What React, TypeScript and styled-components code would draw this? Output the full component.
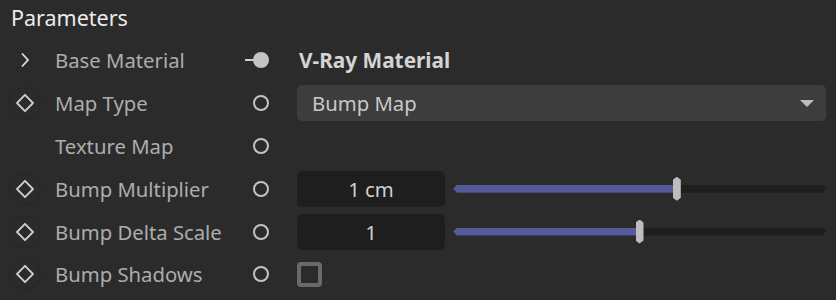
import React from 'react';
import styled, { createGlobalStyle } from 'styled-components';

const GlobalStyle = createGlobalStyle`
    html, body {
        margin: 0;
        padding: 0;
        background: #2b2b2b;
    }
    body {
        font-family: "Noto Sans", "Open Sans", sans-serif;
    }
`;

const Panel = styled.div`
    width: 836px;
    height: 300px;
    background: #2b2b2b;
    box-sizing: border-box;
    overflow: hidden;
`;

const Header = styled.div`
    height: 39px;
    padding-left: 11px;
    font-size: 21.5px;
    line-height: 36px;
    color: #ececec;
`;

const Row = styled.div`
    display: flex;
    align-items: center;
    height: 42.8px;
    padding-left: 9px;
    padding-right: 10px;
`;

const IconSlot = styled.div<{ $round?: boolean }>`
    width: 32px;
    height: 32px;
    flex: none;
    box-sizing: border-box;
    display: flex;
    align-items: center;
    justify-content: center;
    border-radius: 50%;
    border: 1px solid ${p => p.$round ? '#262626' : 'transparent'};
`;

const Label = styled.div`
    width: 190px;
    margin-left: 14px;
    flex: none;
    font-size: 20.3px;
    color: #adadad;
    white-space: nowrap;
`;

const PortSlot = styled.div`
    width: 32px;
    flex: none;
    display: flex;
    align-items: center;
    justify-content: center;
`;

const Value = styled.div`
    flex: 1;
    margin-left: 20px;
    display: flex;
    align-items: center;
    gap: 8px;
`;

const LinkText = styled.div`
    font-size: 20.8px;
    font-weight: bold;
    color: #d4d4d4;
    padding-left: 2px;
`;

const Dropdown = styled.div`
    flex: 1;
    height: 36px;
    border-radius: 5px;
    background: #3d3d3d;
    display: flex;
    align-items: center;
    justify-content: space-between;
    padding: 0 12px 0 15px;
    font-size: 20.3px;
    color: #c8c8c8;
`;

const Caret = styled.div`
    width: 0;
    height: 0;
    border-left: 7px solid transparent;
    border-right: 7px solid transparent;
    border-top: 7px solid #bdbdbd;
`;

const NumberField = styled.div`
    width: 148px;
    height: 36px;
    flex: none;
    border-radius: 5px;
    background: #1e1e1e;
    display: flex;
    align-items: center;
    justify-content: center;
    font-size: 20.3px;
    color: #d0d0d0;
`;

const SliderTrack = styled.div`
    flex: 1;
    height: 8px;
    background: #1e1e1e;
    clip-path: polygon(4px 0, calc(100% - 4px) 0, 100% 50%, calc(100% - 4px) 100%, 4px 100%, 0 50%);
`;

const SliderFill = styled.div`
    height: 100%;
    background: #565a9a;
`;

const SliderWrap = styled.div`
    position: relative;
    flex: 1;
    display: flex;
    align-items: center;
    height: 26px;
`;

const Thumb = styled.div`
    position: absolute;
    top: 1px;
    width: 8px;
    height: 24px;
    margin-left: -4px;
    background: #bdbdbd;
    clip-path: polygon(50% 0, 100% 3px, 100% calc(100% - 3px), 50% 100%, 0 calc(100% - 3px), 0 3px);
`;

const Checkbox = styled.div`
    width: 17px;
    height: 17px;
    border: 4px solid #6a6a6a;
    border-radius: 4px;
`;

const Diamond = () => (
    <svg width="20" height="20" viewBox="0 0 20 20">
        <path d="M10 1.8 L18 10 L10 18.2 L2 10 Z" fill="none" stroke="#cfcfcf" strokeWidth="1.8" strokeLinejoin="round" />
    </svg>
);

const Chevron = () => (
    <svg width="16" height="16" viewBox="0 0 16 16">
        <path d="M5 1.5 L11 8 L5 14.5" fill="none" stroke="#e0e0e0" strokeWidth="1.8" />
    </svg>
);

const Port = ({ linked }: { linked?: boolean }) => (
    <svg width="32" height="20" viewBox="0 0 32 20">
        {linked ? (
            <>
                <line x1="0" y1="10" x2="10" y2="10" stroke="#d0d0d0" strokeWidth="2" />
                <circle cx="16" cy="10" r="8" fill="#c4c4c4" />
            </>
        ) : (
            <circle cx="16" cy="10" r="7" fill="none" stroke="#c4c4c4" strokeWidth="2" />
        )}
    </svg>
);

const Slider = ({ value }: { value: number }) => (
    <SliderWrap>
        <SliderTrack>
            <SliderFill style={{ width: `${value * 100}%` }} />
        </SliderTrack>
        <Thumb style={{ left: `${value * 100}%` }} />
    </SliderWrap>
);

const App = () => {
    return (
        <Panel>
            <GlobalStyle />
            <Header>Parameters</Header>
            <Row>
                <IconSlot><Chevron /></IconSlot>
                <Label>Base Material</Label>
                <PortSlot><Port linked /></PortSlot>
                <Value><LinkText>V-Ray Material</LinkText></Value>
            </Row>
            <Row>
                <IconSlot $round><Diamond /></IconSlot>
                <Label>Map Type</Label>
                <PortSlot><Port /></PortSlot>
                <Value>
                    <Dropdown>Bump Map<Caret /></Dropdown>
                </Value>
            </Row>
            <Row>
                <IconSlot />
                <Label>Texture Map</Label>
                <PortSlot><Port /></PortSlot>
                <Value />
            </Row>
            <Row>
                <IconSlot $round><Diamond /></IconSlot>
                <Label>Bump Multiplier</Label>
                <PortSlot><Port /></PortSlot>
                <Value>
                    <NumberField>1 cm</NumberField>
                    <Slider value={0.6} />
                </Value>
            </Row>
            <Row>
                <IconSlot $round><Diamond /></IconSlot>
                <Label>Bump Delta Scale</Label>
                <PortSlot><Port /></PortSlot>
                <Value>
                    <NumberField>1</NumberField>
                    <Slider value={0.5} />
                </Value>
            </Row>
            <Row>
                <IconSlot $round><Diamond /></IconSlot>
                <Label>Bump Shadows</Label>
                <PortSlot><Port /></PortSlot>
                <Value><Checkbox /></Value>
            </Row>
        </Panel>
    );
};

export default App;
